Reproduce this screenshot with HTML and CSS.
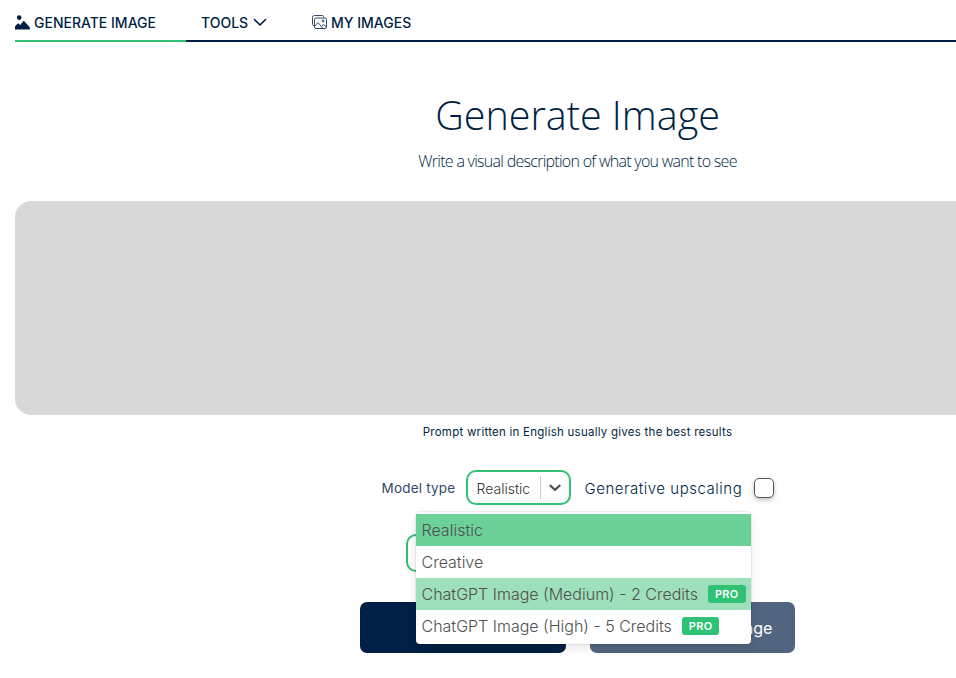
FILE: index.html
```html
<!DOCTYPE html>
<html lang="en">
<head>
<meta charset="utf-8">
<title>Generate Image</title>
<link rel="stylesheet" href="styles.css">
</head>
<body>
<main class="page">
  <nav class="tabs">
    <a class="tab tab-active">
      <svg class="tab-icon" width="15" height="15" viewBox="0 0 15 15"><circle cx="4.2" cy="2.6" r="2.3" fill="#001f44"/><path d="M0 14.4v-2.4c0-.5.2-.9.5-1.2L3 8.2l2.2 1.9 3-3.8c.3-.4.8-.4 1.1 0l5.2 5.7c.2.2.3.5.3.8v1.6z" fill="#001f44"/></svg>
      GENERATE IMAGE
    </a>
    <a class="tab tab-tools">
      TOOLS
      <svg width="14" height="9" viewBox="0 0 14 9"><path d="M1.5 1.5 7 7l5.5-5.5" fill="none" stroke="#001f44" stroke-width="1.6" stroke-linecap="round" stroke-linejoin="round"/></svg>
    </a>
    <a class="tab tab-images">
      <svg class="tab-icon" width="15" height="14" viewBox="0 0 15 14" fill="none" stroke="#33496a" stroke-width="1"><path d="M2.5 10.5h-1a1 1 0 0 1-1-1v-7a2 2 0 0 1 2-2h8a1 1 0 0 1 1 1v1"/><rect x="2.5" y="3" width="12" height="10.5" rx="1.5"/><circle cx="11" cy="6" r="1"/><path d="M2.5 11.5 6 7.5l5 6M9.5 11l2-1.5 3 2.5"/></svg>
      MY IMAGES
    </a>
  </nav>

  <header class="intro">
    <h1 class="title">Generate Image</h1>
    <p class="subtitle">Write a visual description of what you want to see</p>
  </header>

  <div class="prompt"></div>
  <p class="hint">Prompt written in English usually gives the best results</p>

  <div class="options">
    <span class="option-label">Model type</span>
    <div class="select">
      <span class="select-value">Realistic</span>
      <span class="select-sep"></span>
      <svg width="13" height="8" viewBox="0 0 13 8"><path d="M1.5 1.5 6.5 6l5-4.5" fill="none" stroke="#555" stroke-width="2.4" stroke-linecap="round" stroke-linejoin="round"/></svg>
    </div>
    <span class="upscale-label">Generative upscaling</span>
    <span class="checkbox"></span>

    <ul class="menu">
      <li class="menu-item item-selected">Realistic</li>
      <li class="menu-item">Creative</li>
      <li class="menu-item item-focused">ChatGPT Image (Medium) - 2 Credits <span class="pro">PRO</span></li>
      <li class="menu-item">ChatGPT Image (High) - 5 Credits <span class="pro">PRO</span></li>
    </ul>
  </div>

  <div class="second-row">
    <div class="select-hidden"></div>
  </div>

  <div class="actions">
    <button class="btn btn-primary">Generate</button>
    <button class="btn btn-secondary">Image from an image</button>
  </div>
</main>
</body>
</html>
```
FILE: styles.css
```css
* { box-sizing: border-box; }
html, body { margin: 0; height: 100%; overflow: hidden; background: #fff; }
body { font-family: Inter, "Liberation Sans", sans-serif; color: #001f44; }

.page { width: 1125px; margin-left: 15px; }

.tabs {
  display: flex;
  height: 42px;
  border-bottom: 2px solid #001f44;
}
.tab {
  display: flex;
  align-items: center;
  height: 42px;
  padding-top: 4px;
  border-bottom: 2px solid transparent;
  font-size: 14px;
  font-weight: 500;
  white-space: nowrap;
}
.tab-active { width: 171px; gap: 4px; border-bottom-color: #2fc174; }
.tab-tools { width: 111px; margin-left: 15px; gap: 5px; }
.tab-images { gap: 4px; }

.intro { text-align: center; }
.title {
  margin: 48px 0 0;
  font-family: "Open Sans", sans-serif;
  font-size: 39.5px;
  line-height: 50px;
  font-weight: 300;
}
.subtitle {
  margin: 9px 0 0;
  font-family: "Open Sans", sans-serif;
  font-size: 16px;
  line-height: 24px;
  font-weight: 300;
  letter-spacing: -0.72px;
}

.prompt {
  margin-top: 28px;
  height: 214px;
  background: #d9d9d9;
  border-radius: 16px;
}
.hint {
  margin: 9px 0 0;
  text-align: center;
  font-size: 11.5px;
  line-height: 16px;
  letter-spacing: 0.25px;
}

.options {
  position: relative;
  display: flex;
  align-items: center;
  width: 392px;
  margin: 30px auto 0;
  height: 35px;
}
.option-label { flex: none; width: 73px; font-size: 13.5px; color: #33496a; font-weight: 400; letter-spacing: 0.2px; white-space: nowrap; }
.select {
  flex: none;
  display: flex;
  align-items: center;
  width: 105px;
  height: 35px;
  margin-left: 11px;
  padding: 0 8px 0 9px;
  border: 2px solid #2fc174;
  border-radius: 10px;
  background: #fff;
}
.select-value { flex: none; padding-top: 2px; font-size: 14px; font-weight: 300; color: #333; width: 63px; }
.select-sep { flex: none; width: 1px; height: 23px; background: #ccc; margin-right: 8px; }
.upscale-label { flex: none; width: 157px; margin-left: 14px; padding-top: 2px; font-size: 15px; font-weight: 300; color: #001f44; letter-spacing: 0.53px; white-space: nowrap; }
.checkbox {
  flex: none;
  width: 20px;
  height: 20px;
  margin-left: 12px;
  border: 1px solid #555;
  border-radius: 5px;
  background: #fff;
  box-shadow: 0 2px 5px rgba(0,0,0,.25);
}

.menu {
  position: absolute;
  z-index: 2;
  left: 34px;
  top: 42px;
  width: 335px;
  margin: 0;
  padding: 2px 0;
  list-style: none;
  background: #fff;
  border-radius: 4px;
  box-shadow: 0 0 0 1px rgba(0,0,0,.05), 0 4px 11px rgba(0,0,0,.1);
}
.menu-item {
  display: flex;
  align-items: center;
  height: 32px;
  padding: 0 6px;
  font-size: 16px;
  font-weight: 300;
  color: #505050;
  white-space: nowrap;
}
.item-selected { background: #6bd198; }
.item-focused { background: #9ee0bb; }
.pro {
  margin-left: 10px;
  padding: 0 7px;
  height: 18px;
  line-height: 18px;
  border-radius: 3px;
  background: #2fc174;
  color: #fff;
  font-size: 11px;
  font-weight: 600;
  letter-spacing: 0.3px;
}

.second-row { display: flex; justify-content: center; margin-top: 29px; }
.select-hidden {
  width: 343px;
  height: 38px;
  border: 2px solid #2fc174;
  border-radius: 10px;
}

.actions {
  display: flex;
  justify-content: center;
  gap: 24px;
  margin-top: 30px;
}
.btn {
  height: 51px;
  width: 206px;
  border: 0;
  border-radius: 7px;
  color: #fff;
  font: 400 16px Inter, sans-serif;
}
.btn-primary { background: #001f44; }
.btn-secondary { background: #526580; width: 205px; }
```
